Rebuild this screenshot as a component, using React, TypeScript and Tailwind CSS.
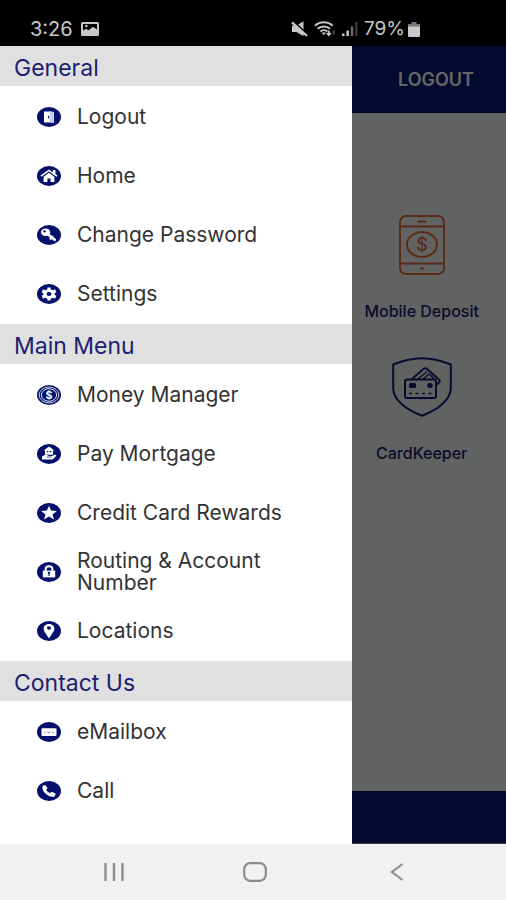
import React from 'react';

interface MenuItem {
  label: string;
  glyph: React.ReactNode;
}

interface MenuSection {
  title: string;
  items: MenuItem[];
}

const NAVY = '#04106b';

const sections: MenuSection[] = [
  {
    title: 'General',
    items: [
      {
        label: 'Logout',
        glyph: (
          <>
            <path d="M7 4.500h6v11H7z" fill="#fff" />
            <path d="M12.500 4l4.500 1v11l-4.500-.5z" fill="#c9cfe6" />
            <path d="M11.500 8.800v2.600" stroke={NAVY} strokeWidth="1.200" />
          </>
        ),
      },
      {
        label: 'Home',
        glyph: (
          <>
            <path d="M4 10.200L12 4.400l8 5.800" fill="none" stroke="#fff" strokeWidth="1.600" />
            <path d="M16 4h2.400v4.600H16z" fill="#fff" />
            <path d="M6.600 10.800l5.400-4 5.400 4V16h-3.800v-3.600h-3.200V16H6.600z" fill="#fff" />
          </>
        ),
      },
      {
        label: 'Change Password',
        glyph: (
          <>
            <ellipse cx="8.600" cy="7.200" rx="4.600" ry="3.800" fill="#fff" />
            <ellipse cx="7.500" cy="6.300" rx="1.400" ry="1.100" fill={NAVY} />
            <path d="M10.500 9l7.300 5.800M13.600 13.400l1.600-1.400" stroke="#fff" strokeWidth="2.600" strokeLinecap="round" />
          </>
        ),
      },
      {
        label: 'Settings',
        glyph: (
          <>
            <ellipse cx="12" cy="10" rx="5.800" ry="4.800" fill="#fff" />
            <path
              d="M12 3.600v12.800M5.300 6.800l13.400 6.400M5.300 13.200l13.400-6.400"
              stroke="#fff"
              strokeWidth="3.200"
            />
            <ellipse cx="12" cy="10" rx="2.500" ry="2.100" fill={NAVY} />
          </>
        ),
      },
    ],
  },
  {
    title: 'Main Menu',
    items: [
      {
        label: 'Money Manager',
        glyph: (
          <>
            <ellipse cx="12" cy="10" rx="9.800" ry="8" fill="none" stroke="#fff" strokeWidth="0.800" />
            <ellipse cx="12" cy="10" rx="7.600" ry="6.300" fill="none" stroke="#fff" strokeWidth="0.900" />
            <text x="12" y="13.800" textAnchor="middle" fontSize="10.500" fontWeight="700" fill="#fff">
              $
            </text>
          </>
        ),
      },
      {
        label: 'Pay Mortgage',
        glyph: (
          <>
            <path d="M12 2.600l5.400 3.800H16v4.400H8V6.400H6.600z" fill="#fff" />
            <path d="M9.800 7.600h1.600M12.600 7.600h1.600" stroke={NAVY} strokeWidth="1.200" />
            <path d="M5 15.600v-3l3.600-2 3.400 1.400h3l3.200-1.400 1.200 1.200-3.800 3.800z" fill="#fff" />
            <path d="M9.600 13h4.800" stroke={NAVY} strokeWidth="0.700" />
          </>
        ),
      },
      {
        label: 'Credit Card Rewards',
        glyph: (
          <path
            d="M12 2.800l2.100 4.800 5.800.4-4.400 3.400 1.500 5-5-2.800-5 2.800 1.500-5L4.100 8l5.800-.4z"
            fill="#fff"
          />
        ),
      },
      {
        label: 'Routing & Account Number',
        glyph: (
          <>
            <path d="M8.600 9.400V7.400c0-4.200 6.800-4.200 6.800 0v2" fill="none" stroke="#fff" strokeWidth="2" />
            <path d="M5.800 8.600h12.400v6.800H5.800z" fill="#fff" />
            <ellipse cx="12" cy="10.800" rx="1.300" ry="1.100" fill={NAVY} />
            <path d="M12 11v3" stroke={NAVY} strokeWidth="1.100" />
          </>
        ),
      },
      {
        label: 'Locations',
        glyph: (
          <>
            <path d="M12 17.800C10.200 14 6.600 11 6.600 7.600 6.600 1.400 17.400 1.400 17.400 7.600c0 3.400-3.600 6.400-5.400 10.200z" fill="#fff" />
            <ellipse cx="12" cy="7" rx="2" ry="1.700" fill={NAVY} />
          </>
        ),
      },
    ],
  },
  {
    title: 'Contact Us',
    items: [
      {
        label: 'eMailbox',
        glyph: (
          <>
            <rect x="4.500" y="6.200" width="15" height="7.800" rx="0.800" fill="#fff" />
            <path d="M7 11.200l2-1.600M17 11.200l-2-1.600M10.400 9.600l1.600 1.200 1.600-1.200" fill="none" stroke="#7f88ba" strokeWidth="1" />
          </>
        ),
      },
      {
        label: 'Call',
        glyph: (
          <path
            d="M5.600 5l2.600-1 2.400 3.200-1.500 1.500c.8 1.600 2.200 2.700 4 3.300l1.900-1.300 3.700 2.100-.9 2.400c-.9.9-3.900.8-6.400-.5-2.900-1.500-5-3.800-5.700-6.100-.3-1.300-.3-2.700-.1-3.600z"
            fill="#fff"
          />
        ),
      },
    ],
  },
];

function MenuIcon({ children }: { children: React.ReactNode }) {
  return (
    <svg viewBox="0 0 24 20" className="h-5 w-6 shrink-0" aria-hidden="true">
      <ellipse cx="12" cy="10" rx="12" ry="10" fill={NAVY} />
      {children}
    </svg>
  );
}

function StatusBar() {
  return (
    <div className="flex h-[46px] shrink-0 items-center justify-between bg-black pl-[30px] pr-[86px] pt-3 text-[#c8c8c8]">
      <div className="flex items-center gap-2">
        <span className="text-xl">3:26</span>
        <svg viewBox="0 0 18 14" className="h-[14px] w-[18px]" aria-hidden="true">
          <path
            d="M1.500 0h15A1.500 1.500 0 0 1 18 1.500v11a1.500 1.500 0 0 1-1.500 1.500h-15A1.500 1.500 0 0 1 0 12.500v-11A1.500 1.500 0 0 1 1.500 0zM2 2v6.500l3-1.800 2.500 1.500L12 4.800l4 2.700V2z"
            fill="currentColor"
            fillRule="evenodd"
          />
          <circle cx="5.400" cy="4" r="1.300" fill="currentColor" />
        </svg>
      </div>
      <div className="flex items-center gap-[6px]">
        <svg viewBox="0 0 17 16" className="h-4 w-[17px]" aria-hidden="true">
          <path d="M1 4.500h4.500l7-4.300v15l-7-4.200H1z" fill="currentColor" />
          <path d="M2.400 0L17 13.800" stroke="#000" strokeWidth="1.600" />
          <path d="M1 1.400L16 15" stroke="currentColor" strokeWidth="2.200" />
        </svg>
        <svg viewBox="0 0 22 16" className="h-4 w-[22px]" aria-hidden="true">
          <g fill="none" stroke="currentColor" strokeWidth="2">
            <path d="M1 4.800c5-4.600 12.600-4.600 17.600 0" />
            <path d="M3.600 7.800c3.600-3.200 8.800-3.200 12.400 0" />
            <path d="M6.400 10.600c2-1.800 5-1.800 7 0" />
          </g>
          <path d="M7.600 11.600h4.400l-2.200 2.600z" fill="currentColor" />
          <path d="M14.800 9.500v4.500m-2-2l2 2.300 2-2.300" fill="none" stroke="currentColor" strokeWidth="1.600" />
          <path d="M19.600 9.500v4" stroke="#555" strokeWidth="1.600" />
        </svg>
        <svg viewBox="0 0 16 14" className="h-[14px] w-4" aria-hidden="true">
          <path d="M0 11.500h2.500V14H0zM4.400 8.500h2.500V14H4.400z" fill="currentColor" />
          <path d="M8.800 4.500h2.500V14H8.800z" fill="#6b6b6b" />
          <path d="M13.200 0h2.300v14h-2.300z" fill="#3c3c3c" />
        </svg>
        <div className="flex items-center gap-[3px]">
          <span className="text-[19px]">79%</span>
          <svg viewBox="0 0 12 15" className="h-[15px] w-3" aria-hidden="true">
            <path d="M3.500 0h5v2h-5z" fill="#777" />
            <path d="M0 2h12v3H0z" fill="#777" />
            <path d="M0 4.500h12V14a1 1 0 0 1-1 1H1a1 1 0 0 1-1-1z" fill="currentColor" />
          </svg>
        </div>
      </div>
    </div>
  );
}

function PhoneIcon() {
  return (
    <svg viewBox="0 0 46 60" className="h-[60px] w-[46px] text-[#e06a3a]" aria-hidden="true">
      <g fill="none" stroke="currentColor" strokeWidth="1.900">
        <rect x="1" y="1" width="44" height="58" rx="6" />
        <path d="M1 11.500h44M1 48.500h44" />
        <ellipse cx="23" cy="29.500" rx="15" ry="12.500" />
        <path d="M19.500 6.500h7" strokeLinecap="round" />
      </g>
      <ellipse cx="23" cy="53.500" rx="1.800" ry="1.500" fill="currentColor" />
      <text x="23" y="36" textAnchor="middle" fontSize="18" fontWeight="500" fill="currentColor">
        $
      </text>
    </svg>
  );
}

function ShieldCardIcon() {
  return (
    <svg viewBox="0 0 60 60" className="h-[60px] w-[60px] text-[#16206f]" aria-hidden="true">
      <g fill="none" stroke="currentColor" strokeWidth="2" strokeLinejoin="round">
        <path d="M30 1.200C21 1.200 10 4 1.200 7.500V31c0 13 15 22.500 28.800 27.800C43.800 53.500 58.800 44 58.800 31V7.500C50 4 39 1.200 30 1.200z" />
        <rect x="13" y="22.500" width="31" height="18.500" rx="2" />
        <path d="M20 22L32 11.600q1.600-.9 3 .3L47.500 23q.8 1.200-.3 2.200L44 28.500" />
        <path d="M26 22l9-7.500M31 22l6-5M37 17l7 6.500" strokeWidth="1.500" />
        <path d="M17 36.500h23.500" strokeWidth="1.600" strokeDasharray="3 3.500" />
      </g>
      <rect x="17" y="26" width="7" height="5" rx="1.500" fill="currentColor" />
      <ellipse cx="38" cy="28.500" rx="2.800" ry="2.500" fill="currentColor" />
    </svg>
  );
}

function Tile({ label, icon }: { label: string; icon: React.ReactNode }) {
  return (
    <button type="button" className="col-start-3 flex flex-col items-center gap-[27px]">
      {icon}
      <span className="whitespace-nowrap text-base font-medium leading-[18px] text-[#16206f]">{label}</span>
    </button>
  );
}

function HomePage() {
  return (
    <div className="flex flex-1 flex-col bg-[#f3f4f6]">
      <header className="flex h-[67px] items-center justify-end bg-[#0c1973] pr-8">
        <button type="button" className="text-lg font-semibold text-white">
          LOGOUT
        </button>
      </header>
      <div className="grid flex-1 grid-cols-3 content-start gap-y-[37px] pt-[102px]">
        <Tile label="Mobile Deposit" icon={<PhoneIcon />} />
        <Tile label="CardKeeper" icon={<ShieldCardIcon />} />
      </div>
      <footer className="h-[53px] border-b border-[#999] bg-[#0c1973]" />
    </div>
  );
}

function Drawer() {
  return (
    <nav className="absolute inset-y-0 left-0 w-[352px] max-w-[80%] overflow-y-auto bg-white">
      {sections.map(section => (
        <section key={section.title}>
          <h2 className="flex h-10 items-center bg-[#e0e0e0] px-[14px] pt-[3px] text-[23px] leading-7 text-[#1c2070]">
            {section.title}
          </h2>
          <ul className="pb-px pt-px">
            {section.items.map(item => (
              <li key={item.label}>
                <a href="#" className="flex h-[59px] items-center gap-4 pl-[37px] pr-14 text-[21px] leading-[22px] text-[#333]">
                  <MenuIcon>{item.glyph}</MenuIcon>
                  {item.label}
                </a>
              </li>
            ))}
          </ul>
        </section>
      ))}
    </nav>
  );
}

function SystemNav() {
  return (
    <div className="grid h-14 shrink-0 grid-cols-3 place-items-center bg-[#f1f1f1] pl-[43px] pr-[38px] text-[#8c8c8c]">
      <button type="button" aria-label="Recent apps">
        <svg viewBox="0 0 20 18" className="h-[18px] w-5" aria-hidden="true">
          <path d="M1.500 0v18M10 0v18M18.500 0v18" stroke="currentColor" strokeWidth="2.400" />
        </svg>
      </button>
      <button type="button" aria-label="Home screen">
        <svg viewBox="0 0 24 20" className="h-5 w-6" aria-hidden="true">
          <rect x="1.200" y="1.200" width="21.600" height="17.600" rx="6" fill="none" stroke="currentColor" strokeWidth="2.200" />
        </svg>
      </button>
      <button type="button" aria-label="Back">
        <svg viewBox="0 0 14 18" className="h-[18px] w-[14px]" aria-hidden="true">
          <path d="M12.500 1L2 9l10.500 8" fill="none" stroke="currentColor" strokeWidth="2.200" />
        </svg>
      </button>
    </div>
  );
}

export default function App() {
  return (
    <div className="flex min-h-screen flex-col font-[Inter,Roboto,sans-serif]">
      <StatusBar />
      <main className="relative flex flex-1 flex-col">
        <HomePage />
        <div className="absolute inset-0 bg-black/60" />
        <Drawer />
      </main>
      <SystemNav />
    </div>
  );
}
